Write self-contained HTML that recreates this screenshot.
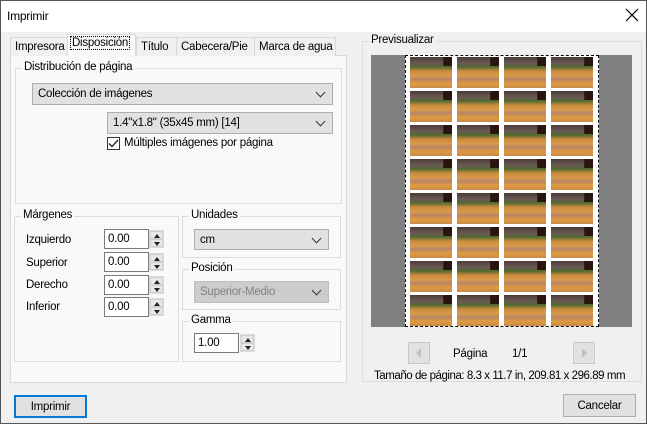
<!DOCTYPE html>
<html><head><meta charset="utf-8"><style>
*{box-sizing:border-box;margin:0;padding:0}
body{width:647px;height:424px;overflow:hidden;font-family:"Liberation Sans",sans-serif;font-size:11.5px;letter-spacing:-0.25px;color:#000;background:#333}
.win{position:absolute;left:0;top:0;width:647px;height:424px;background:#f0f0f0;border:1px solid #555}
.title{position:absolute;left:0;top:0;width:645px;height:31px;background:#fff}
.a{position:absolute}
.t{position:absolute;white-space:nowrap}
.grp{position:absolute;border:1px solid #dcdcdc}
.gl{position:absolute;top:-8px;left:6px;background:#f0f0f0;padding:0 2px;white-space:nowrap}
.combo{position:absolute;background:#e1e1e1;border:1px solid #adadad;padding:4px 0 0 5px;white-space:nowrap}
.combo:after{content:"";position:absolute;right:8px;top:5px;width:6px;height:6px;border-right:1px solid #333;border-bottom:1px solid #333;transform:rotate(45deg)}
.inp{position:absolute;background:#fff;border:1px solid #7a7a7a;padding:3px 0 0 3px}
.spin{position:absolute;width:15px;border:1px solid #dcdcdc;background:#f0f0f0}
.spin i{display:block;height:50%;background:#e8e8e8;border:1px solid #cfcfcf;position:relative}
.spin i.u:after{content:"";position:absolute;left:3px;top:2px;border-left:3px solid transparent;border-right:3px solid transparent;border-bottom:4px solid #222}
.spin i.d:after{content:"";position:absolute;left:3px;top:2px;border-left:3px solid transparent;border-right:3px solid transparent;border-top:4px solid #222}
.tab{position:absolute;top:36px;height:19px;border:1px solid #d9d9d9;border-bottom:none;background:#f0f0f0;padding:3px 0 0 4px;white-space:nowrap;overflow:hidden}
.btn{position:absolute;background:#e1e1e1;border:1px solid #adadad;text-align:center;padding-top:5px}
.grid{position:absolute;left:409px;top:56px;display:grid;grid-template-columns:repeat(4,42px);grid-auto-rows:31px;column-gap:5px;row-gap:3px}
.th{background:linear-gradient(90deg,transparent 78%,#2a1410 80%) 0 0/100% 30% no-repeat,linear-gradient(180deg,#4a3a36 0,#6b5954 20%,#4e6a32 32%,#c88a3c 45%,#d99a4a 60%,#b88668 72%,#e09a3e 85%,#c98a4a 100%)}
</style></head><body><div class="win">
<div class="title"><span class="t" style="left:6px;top:8px;font-size:12px">Imprimir</span>
<svg class="a" style="left:624px;top:7px" width="14" height="14"><path d="M1 1L13 13M13 1L1 13" stroke="#000" stroke-width="1.2"/></svg></div>

<div class="a" style="left:9px;top:54px;width:337px;height:328px;background:#f9f9f9;border:1px solid #d9d9d9"></div>
<div class="tab" style="left:9px;width:58px">Impresora</div>
<div class="tab" style="left:135px;width:41px">Título</div>
<div class="tab" style="left:175px;width:79px">Cabecera/Pie</div>
<div class="tab" style="left:253px;width:82px">Marca de agua</div>
<div class="tab" style="left:66px;top:33px;height:22px;width:69px;background:#f9f9f9;padding:2px 0 0 2px"><span style="border:1px dotted #000;padding:0 1px">Disposición</span></div>

<div class="grp" style="left:14px;top:67px;width:327px;height:136px"><span class="gl" style="background:#f9f9f9">Distribución de página</span></div>
<div class="combo" style="left:31px;top:82px;width:301px;height:22px">Colección de imágenes</div>
<div class="combo" style="left:106px;top:111px;width:226px;height:22px">1.4"x1.8" (35x45 mm) [14]</div>
<div class="a" style="left:106px;top:136px;width:13px;height:13px;border:1px solid #333;background:#fff"><svg width="11" height="11" style="position:absolute;left:0;top:0"><path d="M1 5.5L4 8.5L10 2" stroke="#222" stroke-width="1.3" fill="none"/></svg></div>
<span class="t" style="left:123px;top:136px">Múltiples imágenes por página</span>

<div class="grp" style="left:13px;top:215px;width:165px;height:146px"><span class="gl" style="background:#f9f9f9">Márgenes</span></div>
<span class="t" style="left:25px;top:233px">Izquierdo</span>
<span class="t" style="left:25px;top:256px">Superior</span>
<span class="t" style="left:25px;top:278px">Derecho</span>
<span class="t" style="left:25px;top:300px">Inferior</span>
<div class="inp" style="left:103px;top:228px;width:45px;height:20px">0.00</div>
<div class="inp" style="left:103px;top:251px;width:45px;height:20px">0.00</div>
<div class="inp" style="left:103px;top:274px;width:45px;height:20px">0.00</div>
<div class="inp" style="left:103px;top:296px;width:45px;height:20px">0.00</div>
<div class="spin" style="left:148px;top:229px;height:18px"><i class="u"></i><i class="d"></i></div>
<div class="spin" style="left:148px;top:252px;height:18px"><i class="u"></i><i class="d"></i></div>
<div class="spin" style="left:148px;top:275px;height:18px"><i class="u"></i><i class="d"></i></div>
<div class="spin" style="left:148px;top:297px;height:18px"><i class="u"></i><i class="d"></i></div>

<div class="grp" style="left:181px;top:215px;width:159px;height:42px"><span class="gl" style="background:#f9f9f9">Unidades</span></div>
<div class="combo" style="left:193px;top:228px;width:135px;height:21px">cm</div>
<div class="grp" style="left:181px;top:268px;width:159px;height:41px"><span class="gl" style="background:#f9f9f9">Posición</span></div>
<div class="combo" style="left:193px;top:280px;width:135px;height:22px;background:#ccc;border-color:#bfbfbf;color:#838383">Superior-Medio</div>
<div class="grp" style="left:181px;top:320px;width:159px;height:41px"><span class="gl" style="background:#f9f9f9">Gamma</span></div>
<div class="inp" style="left:193px;top:332px;width:45px;height:20px">1.00</div>
<div class="spin" style="left:239px;top:333px;height:18px"><i class="u"></i><i class="d"></i></div>

<div class="btn" style="left:13px;top:394px;width:73px;height:23px;border:2px solid #0078d7;padding-top:4px">Imprimir</div>
<div class="btn" style="left:562px;top:393px;width:73px;height:23px">Cancelar</div>

<div class="grp" style="left:361px;top:40px;width:280px;height:341px"><span class="gl">Previsualizar</span></div>
<div class="a" style="left:370px;top:54px;width:261px;height:272px;background:#808080"></div>
<div class="a" style="left:404px;top:54px;width:194px;height:272px;background:#fff;border:1px dashed #000"></div>
<div class="grid">
<div class="th"></div><div class="th"></div><div class="th"></div><div class="th"></div>
<div class="th"></div><div class="th"></div><div class="th"></div><div class="th"></div>
<div class="th"></div><div class="th"></div><div class="th"></div><div class="th"></div>
<div class="th"></div><div class="th"></div><div class="th"></div><div class="th"></div>
<div class="th"></div><div class="th"></div><div class="th"></div><div class="th"></div>
<div class="th"></div><div class="th"></div><div class="th"></div><div class="th"></div>
<div class="th"></div><div class="th"></div><div class="th"></div><div class="th"></div>
<div class="th"></div><div class="th"></div><div class="th"></div><div class="th"></div>
</div>
<div class="a" style="left:407px;top:341px;width:22px;height:22px;background:#e1e1e1;border:1px solid #c8c8c8"><svg width="20" height="20"><path d="M12 5L7 10L12 15Z" fill="#bfbfbf"/></svg></div>
<div class="a" style="left:572px;top:341px;width:22px;height:22px;background:#e1e1e1;border:1px solid #c8c8c8"><svg width="20" height="20"><path d="M8 5L13 10L8 15Z" fill="#bfbfbf"/></svg></div>
<span class="t" style="left:452px;top:347px">Página</span>
<span class="t" style="left:511px;top:347px">1/1</span>
<span class="t" style="left:373px;top:369px;letter-spacing:-0.45px">Tamaño de página: 8.3 x 11.7 in, 209.81 x 296.89 mm</span>
</div></body></html>
